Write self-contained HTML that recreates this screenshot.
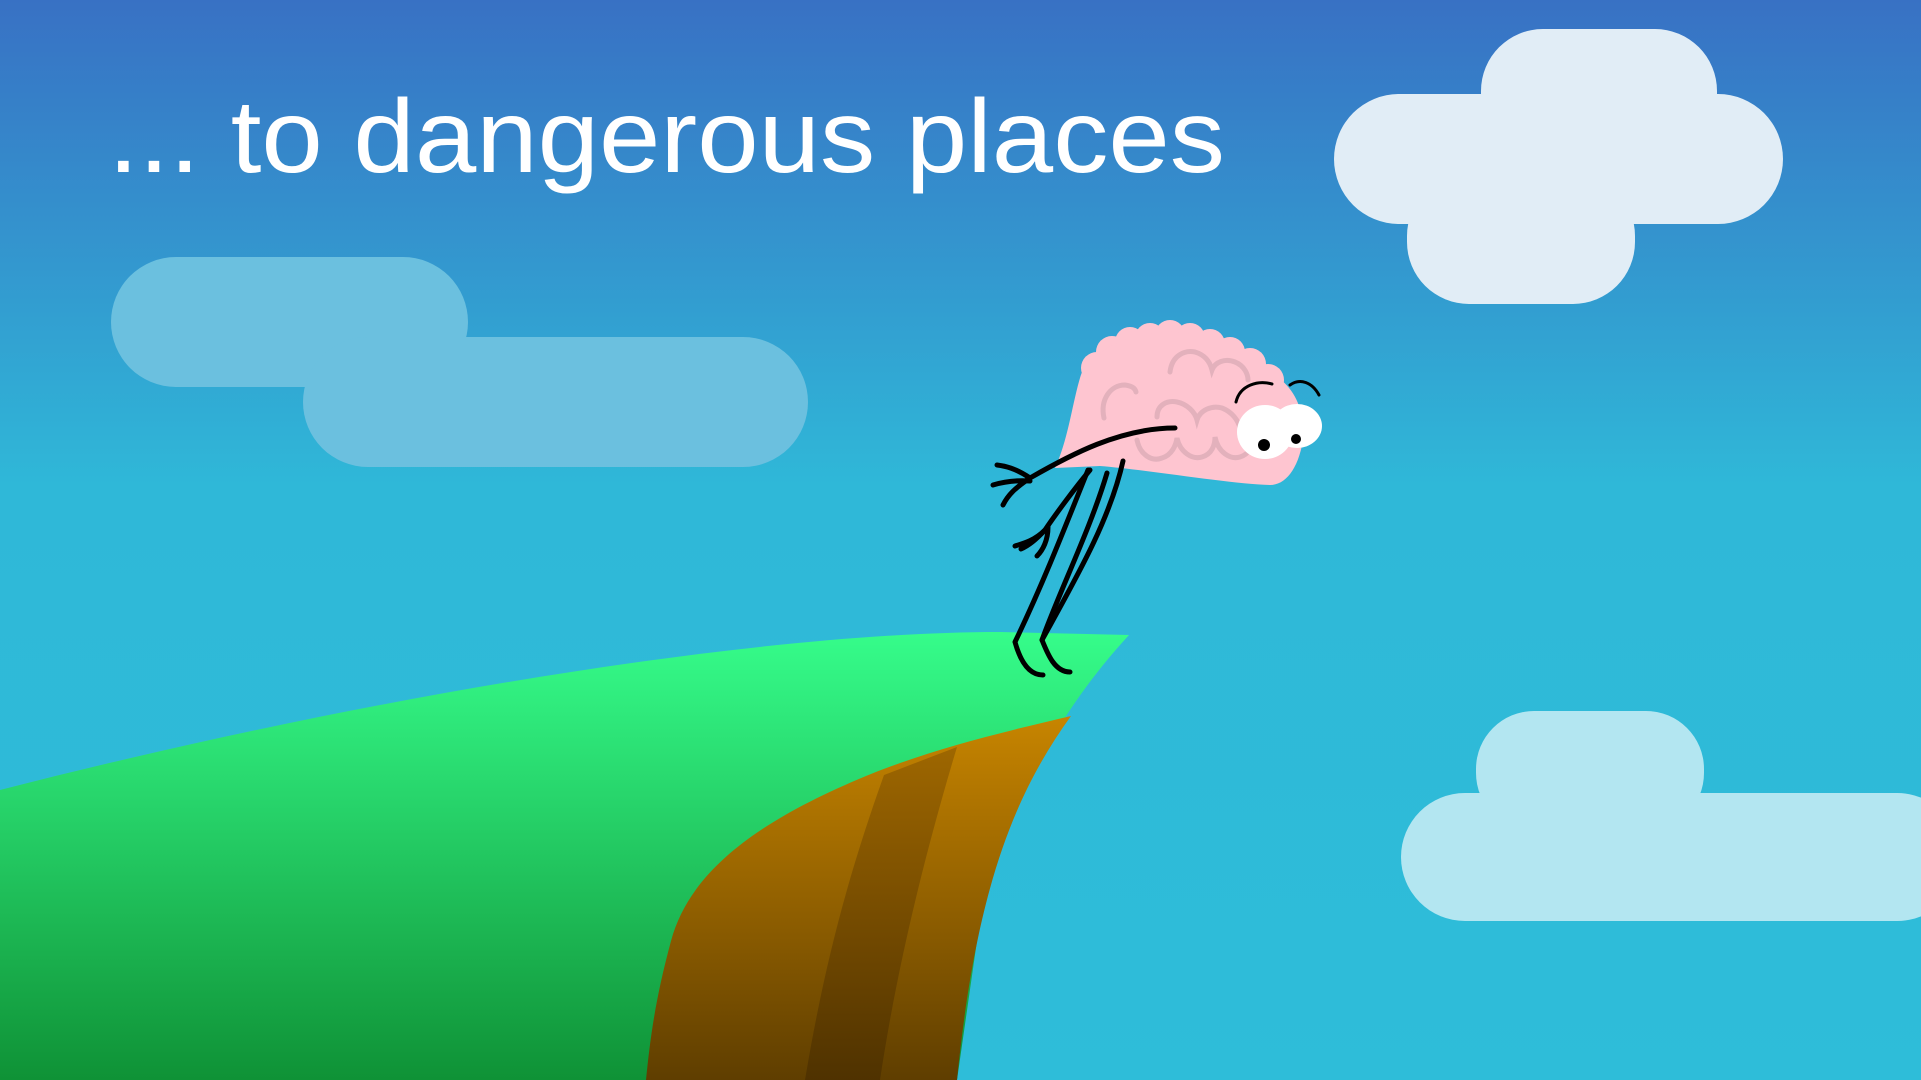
<!DOCTYPE html>
<html><head><meta charset="utf-8"><style>html,body{margin:0;padding:0;overflow:hidden}svg{display:block}</style></head>
<body>
<svg width="1921" height="1080" viewBox="0 0 1921 1080" xmlns="http://www.w3.org/2000/svg">
<defs>
<linearGradient id="sky" x1="0" y1="0" x2="0" y2="1"><stop offset="0" stop-color="#3871c4"/><stop offset="0.45" stop-color="#2fb8d8"/><stop offset="1" stop-color="#2ebdd9"/></linearGradient>
<linearGradient id="gr" x1="0" y1="630" x2="0" y2="1080" gradientUnits="userSpaceOnUse"><stop offset="0" stop-color="#36fd8b"/><stop offset="1" stop-color="#0f9236"/></linearGradient>
<linearGradient id="br" x1="0" y1="710" x2="0" y2="1080" gradientUnits="userSpaceOnUse"><stop offset="0" stop-color="#c98600"/><stop offset="1" stop-color="#5f3e00"/></linearGradient>
<linearGradient id="br2" x1="0" y1="740" x2="0" y2="1080" gradientUnits="userSpaceOnUse"><stop offset="0" stop-color="#a06800"/><stop offset="1" stop-color="#4f3200"/></linearGradient>
</defs>
<rect width="1921" height="1080" fill="url(#sky)"/>
<text x="108" y="172" font-family="Liberation Sans, sans-serif" font-size="104" fill="#fff" textLength="1117" lengthAdjust="spacingAndGlyphs">... to dangerous places</text>
<g fill="#e1edf6">
<rect x="1481" y="29" width="236" height="130" rx="62"/>
<rect x="1407" y="174" width="228" height="130" rx="62"/>
<rect x="1334" y="94" width="449" height="130" rx="65"/>
</g>
<g fill="#6bc0df">
<rect x="111" y="257" width="357" height="130" rx="65"/>
<rect x="303" y="337" width="505" height="130" rx="65"/>
</g>
<g fill="#b3e6f1">
<rect x="1476" y="711" width="228" height="120" rx="58"/>
<rect x="1401" y="793" width="560" height="128" rx="64"/>
</g>
<path d="M0,790 C350,700 750,632 1000,632 L1129,635 C1060,710 1010,800 980,920 L957,1080 L0,1080 Z" fill="url(#gr)"/>
<path d="M1071,716 C990,735 930,750 866,776 C760,820 690,870 671,941 C655,1000 650,1040 646,1080 L957,1080 C975,900 1010,800 1071,716 Z" fill="url(#br)"/>
<path d="M884,775 L957,747 C920,870 895,980 880,1080 L805,1080 C825,960 850,870 884,775 Z" fill="url(#br2)"/>
<!-- brain -->
<g fill="#fec5d0">
<circle cx="1097" cy="368" r="16"/><circle cx="1112" cy="352" r="16"/><circle cx="1130" cy="342" r="15"/><circle cx="1150" cy="338" r="15"/><circle cx="1170" cy="335" r="15"/><circle cx="1190" cy="338" r="15"/><circle cx="1210" cy="344" r="15"/><circle cx="1230" cy="352" r="15"/><circle cx="1250" cy="364" r="16"/><circle cx="1268" cy="380" r="16"/>
<path d="M1055,468 C1068,440 1072,405 1080,378 C1084,365 1090,358 1097,355 L1112,345 L1130,338 L1150,334 L1170,331 L1190,334 L1210,340 L1230,348 L1250,360 L1270,372 C1292,385 1305,405 1303,440 C1298,470 1285,485 1270,485 C1230,484 1150,470 1100,466 Z"/>
</g>
<g fill="none" stroke="#e3b1bc" stroke-width="5" stroke-linecap="round">
<path d="M1104,418 C1100,400 1110,385 1125,385 C1132,386 1135,388 1136,392"/>
<path d="M1170,372 C1172,355 1185,350 1195,352 C1205,355 1210,362 1212,370 C1215,362 1225,358 1235,362 C1245,366 1248,375 1248,380"/>
<path d="M1157,417 C1157,405 1167,400 1177,402 C1187,404 1195,412 1197,420 C1200,410 1212,405 1222,408 C1232,412 1238,420 1240,428"/>
<path d="M1137,440 C1140,455 1152,462 1162,458 C1172,455 1176,445 1177,438 C1180,452 1192,460 1202,457 C1212,454 1215,445 1215,437 C1218,452 1230,460 1240,457 C1250,454 1252,445 1252,440"/>
</g>
<ellipse cx="1265" cy="432" rx="28" ry="27" fill="#fff"/>
<ellipse cx="1297" cy="426" rx="25" ry="22" fill="#fff"/>
<circle cx="1264" cy="445" r="6"/><circle cx="1296" cy="439" r="5"/>
<g fill="none" stroke="#000" stroke-width="3" stroke-linecap="round">
<path d="M1236,402 C1240,385 1258,380 1272,384"/>
<path d="M1290,385 C1300,378 1312,382 1319,395"/>
</g>
<g fill="none" stroke="#000" stroke-width="5" stroke-linecap="round" stroke-linejoin="round">
<path d="M1175,428 C1120,428 1070,455 1030,478 C1015,488 1008,495 1003,505"/>
<path d="M1030,478 C1015,468 1005,466 997,465"/>
<path d="M1030,481 C1015,480 1003,482 993,485"/>
<path d="M1090,470 C1075,488 1055,515 1045,530 C1035,540 1025,543 1015,546"/>
<path d="M1045,530 C1035,541 1028,546 1021,549"/>
<path d="M1048,527 C1048,540 1043,550 1037,556"/>
<path d="M1088,470 C1060,540 1040,590 1015,642 C1020,660 1028,675 1043,675"/>
<path d="M1107,473 C1090,530 1060,590 1042,640 C1048,655 1055,672 1070,672"/>
<path d="M1123,461 C1110,520 1075,580 1042,640"/>
</g>
</svg>
</body></html>
